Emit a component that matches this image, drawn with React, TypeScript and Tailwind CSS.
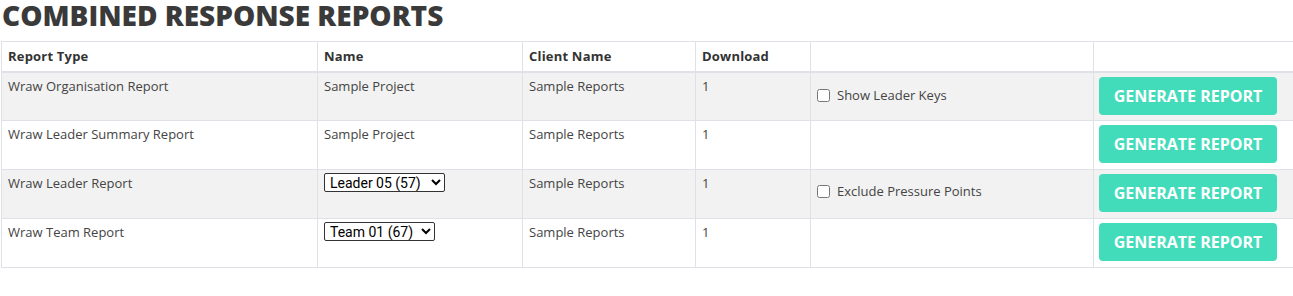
import React from "react";

const font = { fontFamily: '"Open Sans", "Liberation Sans", sans-serif' };

function Btn() {
  return (
    <button className="w-[178px] h-[38px] rounded-[4px] bg-[#43dcbb] text-white font-bold text-[16px] uppercase tracking-normal">
      Generate Report
    </button>
  );
}

function Check({ label, mt }: { label: string; mt: string }) {
  return (
    <label className={`flex items-center gap-[7px] ${mt} text-[13px] text-[#444]`}>
      <input type="checkbox" className="w-[13px] h-[13px] m-0 ml-[6px]" />
      {label}
    </label>
  );
}

function Sel({ value, w }: { value: string; w: string }) {
  return (
    <select
      className={`${w} h-[19px] border border-[#333] rounded-[2px] text-[14px] leading-none text-black bg-white px-[1px] -mt-[1px] block`}
      style={{ fontFamily: 'Roboto, "Liberation Sans", sans-serif' }}
      defaultValue={value}
    >
      <option>{value}</option>
    </select>
  );
}

export default function App() {
  const td = "border border-[#dee2e6] align-top px-[6px] pt-[4px] text-[13px] text-[#444]";
  const rows = [
    { type: "Wraw Organisation Report", name: <span>Sample Project</span>, extra: <Check label="Show Leader Keys" mt="mt-[13px]" />, bg: "bg-[#f2f2f2]" },
    { type: "Wraw Leader Summary Report", name: <span>Sample Project</span>, extra: null, bg: "bg-white" },
    { type: "Wraw Leader Report", name: <Sel value="Leader 05 (57)" w="w-[121px]" />, extra: <Check label="Exclude Pressure Points" mt="mt-[12px]" />, bg: "bg-[#f2f2f2]" },
    { type: "Wraw Team Report", name: <Sel value="Team 01 (67)" w="w-[111px]" />, extra: null, bg: "bg-white" },
  ];
  return (
    <div className="w-[1293px] h-[296px] overflow-hidden bg-white" style={font}>
      <div className="h-[41px] pl-[2px] flex items-start">
        <h1 className="text-[28px] font-extrabold text-[#3a3a3a] leading-[30px] whitespace-nowrap">
          COMBINED RESPONSE REPORTS
        </h1>
      </div>
      <table className="ml-px border-collapse table-fixed w-[1310px]">
        <colgroup>
          <col className="w-[316px]" />
          <col className="w-[205px]" />
          <col className="w-[173px]" />
          <col className="w-[115px]" />
          <col className="w-[283px]" />
          <col />
        </colgroup>
        <thead>
          <tr className="h-[30px]">
            {["Report Type", "Name", "Client Name", "Download", "", ""].map((h, i) => (
              <th key={i} className="border border-[#dee2e6] border-b-2 text-left align-middle px-[6px] text-[13px] tracking-[0.2px] font-bold text-[#333]">
                {h}
              </th>
            ))}
          </tr>
        </thead>
        <tbody>
          {rows.map((r, i) => (
            <tr key={i} className={`h-[49px] ${r.bg}`}>
              <td className={td}>{r.type}</td>
              <td className={td}>{r.name}</td>
              <td className={td}>Sample Reports</td>
              <td className={td}>1</td>
              <td className="border border-[#dee2e6] align-top p-0">{r.extra}</td>
              <td className="border border-[#dee2e6] align-top pl-[5px] pt-[4px] pb-[5px]">
                <Btn />
              </td>
            </tr>
          ))}
        </tbody>
      </table>
    </div>
  );
}
